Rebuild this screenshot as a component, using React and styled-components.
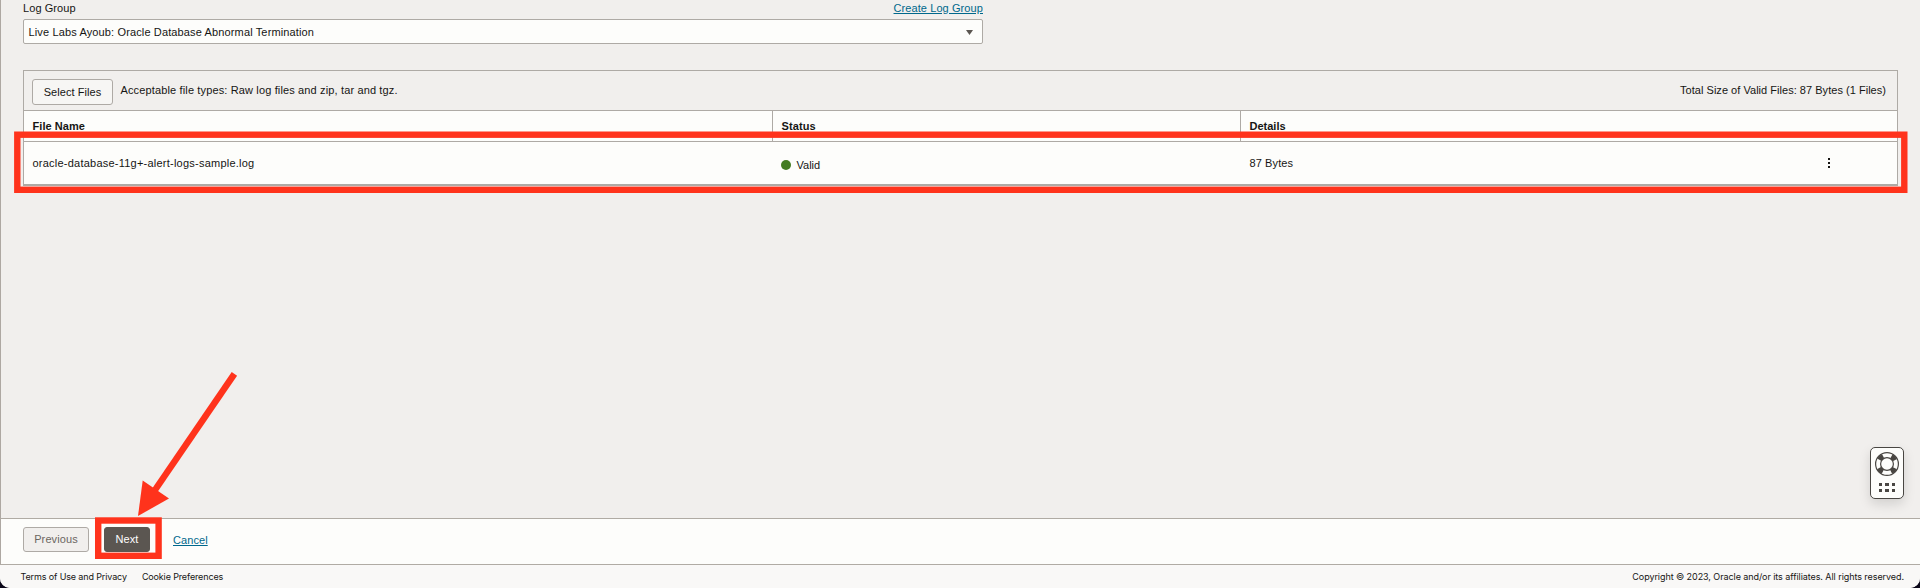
import React from 'react';
import styled, { createGlobalStyle } from 'styled-components';

const Global = createGlobalStyle`
  * { box-sizing: border-box; }
  body { margin: 0; background: #0b0719; overflow: hidden; }
`;

const Page = styled.div`
  position: relative;
  display: flex;
  flex-direction: column;
  width: 1920px;
  height: 588px;
  overflow: hidden;
  background: #f1efed;
  border-radius: 0 0 10px 10px;
  color: #161513;
  font: 11px/14px "Liberation Sans", Arial, sans-serif;
`;

const Content = styled.main`
  flex: 1;
  border-left: 1px solid #aea8a2;
  padding: 1px 22px 0;
`;

const Field = styled.section`
  width: 960px;
`;

const FieldHeader = styled.div`
  display: flex;
  justify-content: space-between;
  height: 18px;
`;

const Label = styled.span`
  letter-spacing: ${(p) => p.$spacing || 0}px;
`;

const Link = styled.a`
  color: #00688c;
  text-decoration: underline;
  letter-spacing: ${(p) => p.$spacing || 0}px;
`;

const Select = styled.div`
  display: flex;
  align-items: center;
  justify-content: space-between;
  height: 25px;
  padding: 0 9px 0 4.5px;
  background: #fdfdfb;
  border: 1px solid #aeaaa5;
  border-radius: 2px;
`;

const Caret = styled.svg`
  margin-top: 2px;
  fill: #5b5651;
`;

const FilePanel = styled.section`
  width: 1875px;
  margin-top: 26px;
  border: 1px solid #aeaaa5;
  border-bottom-width: 2px;
`;

const Toolbar = styled.div`
  display: flex;
  align-items: flex-start;
  height: 39px;
  padding: 8px 11px 0 8px;
`;

const Hint = styled.span`
  margin: 4px 0 0 7.5px;
  letter-spacing: ${(p) => p.$spacing || 0}px;
`;

const Total = styled.span`
  margin: 4px 0 0 auto;
  letter-spacing: ${(p) => p.$spacing || 0}px;
`;

const Button = styled.button`
  width: ${(p) => p.$width}px;
  height: ${(p) => p.$height || 25}px;
  padding: 0 0 ${(p) => p.$lift || 0}px;
  font: inherit;
  letter-spacing: ${(p) => p.$spacing || 0}px;
  border-radius: 3px;
  border: 1px solid ${(p) => (p.$primary ? '#5b5651' : '#aeaaa5')};
  background: ${(p) => (p.$primary ? '#5b5651' : p.$muted ? '#f1efed' : '#f7f6f4')};
  color: ${(p) => (p.$primary ? '#fff' : p.$muted ? '#6b6661' : '#161513')};
`;

const Row = styled.div`
  display: grid;
  grid-template-columns: 749px 468px 1fr;
  height: ${(p) => p.$height}px;
  background: #fdfdfb;
  border-top: 1px solid #aeaaa5;
`;

const HeadCell = styled.div`
  padding: 8px 8px 0 8.5px;
  font-weight: bold;
  letter-spacing: ${(p) => p.$spacing || 0}px;
  border-right: ${(p) => (p.$last ? 'none' : '1px solid #aeaaa5')};
`;

const Cell = styled.div`
  display: flex;
  align-items: flex-start;
  padding: ${(p) => p.$top || 14}px 63px 0 8.5px;
  letter-spacing: ${(p) => p.$spacing || 0}px;
`;

const StatusDot = styled.span`
  width: 10px;
  height: 10px;
  margin: 2px 5.5px 0 -0.5px;
  border-radius: 50%;
  background: #437c22;
`;

const KebabIcon = styled.svg`
  margin: 1px 0 0 auto;
`;

const Actions = styled.div`
  display: flex;
  align-items: flex-start;
  gap: 15px;
  height: 46px;
  padding: 8px 22px 0;
  background: #fdfdfb;
  border-top: 1px solid #b0aba4;
  border-left: 1px solid #aea8a2;

  ${Link} { margin: 6px 0 0 8px; }
`;

const Footer = styled.footer`
  display: flex;
  gap: 15px;
  height: 24px;
  padding: 5px 16px 0 20.5px;
  background: #f9f8f7;
  border-top: 1px solid #b0aba4;
  font: 9px/13px Inter, sans-serif;

  span:last-child { margin-left: auto; }
`;

const HelpWidget = styled.aside`
  position: absolute;
  left: 1870px;
  top: 447px;
  width: 34px;
  height: 52px;
  border: 1px solid #494642;
  border-radius: 5px;
  background: #fdfdfb;
  box-shadow: 0 5px 12px rgba(0, 0, 0, 0.13);
`;

const Annotations = styled.svg`
  position: absolute;
  left: 0;
  top: 0;
  pointer-events: none;
`;

function HelpIcon() {
  return (
    <svg width="32" height="50" viewBox="0 0 32 50" fill="none">
      <circle cx="16" cy="16" r="11.4" stroke="#494642" strokeWidth="1.2" />
      <circle cx="16" cy="16" r="8.8" stroke="#494642" strokeWidth="5" strokeDasharray="5.2 8.623" strokeDashoffset="-4.3" />
      <circle cx="16" cy="16" r="6.4" stroke="#494642" strokeWidth="1.2" />
      <g fill="#494642">
        <path d="M8 35h3v3H8zM14 35h4v3h-4zM21 35h3v3h-3zM8 41h3v3H8zM14 41h4v3h-4zM21 41h3v3h-3z" />
      </g>
    </svg>
  );
}

export default function App() {
  return (
    <>
      <Global />
      <Page>
        <Content>
          <Field>
            <FieldHeader>
              <Label $spacing={0.08}>Log Group</Label>
              <Link $spacing={0.09}>Create Log Group</Link>
            </FieldHeader>
            <Select>
              <Label $spacing={0.135}>Live Labs Ayoub: Oracle Database Abnormal Termination</Label>
              <Caret width="7" height="5"><path d="M0 0h7L3.5 5z" /></Caret>
            </Select>
          </Field>
          <FilePanel>
            <Toolbar>
              <Button $width={81} $height={26} $spacing={0.06}>Select Files</Button>
              <Hint $spacing={0.14}>Acceptable file types: Raw log files and zip, tar and tgz.</Hint>
              <Total $spacing={0.03}>Total Size of Valid Files: 87 Bytes (1 Files)</Total>
            </Toolbar>
            <Row $height={31}>
              <HeadCell $spacing={0.06}>File Name</HeadCell>
              <HeadCell $spacing={0.1}>Status</HeadCell>
              <HeadCell $last>Details</HeadCell>
            </Row>
            <Row $height={43}>
              <Cell $spacing={0.23}>oracle-database-11g+-alert-logs-sample.log</Cell>
              <Cell $top={16}><StatusDot />Valid</Cell>
              <Cell $spacing={0.1}>
                87 Bytes
                <KebabIcon width="10" height="12" fill="#161513">
                  <path d="M4 1h2v2H4zM4 5h2v2H4zM4 9h2v2H4z" />
                </KebabIcon>
              </Cell>
            </Row>
          </FilePanel>
        </Content>
        <Actions>
          <Button $width={66} $muted $spacing={0.1} $lift={2}>Previous</Button>
          <Button $width={46} $primary $spacing={0.06} $lift={2}>Next</Button>
          <Link $spacing={0.08}>Cancel</Link>
        </Actions>
        <Footer>
          <Label $spacing={-0.13}>Terms of Use and Privacy</Label>
          <Label $spacing={-0.14}>Cookie Preferences</Label>
          <Label $spacing={-0.07}>Copyright © 2023, Oracle and/or its affiliates. All rights reserved.</Label>
        </Footer>
        <HelpWidget><HelpIcon /></HelpWidget>
        <Annotations width="1920" height="588" fill="none" stroke="#ff331c">
          <rect x="17.3" y="134.7" width="1887" height="55.1" strokeWidth="6.4" />
          <rect x="98.2" y="520.5" width="60.4" height="35.3" strokeWidth="6.4" />
          <path d="M234.4 373.8L155 490" strokeWidth="6.5" />
          <path d="M138 516L142.7 480.5L169 498.5Z" fill="#ff331c" stroke="none" />
        </Annotations>
      </Page>
    </>
  );
}
